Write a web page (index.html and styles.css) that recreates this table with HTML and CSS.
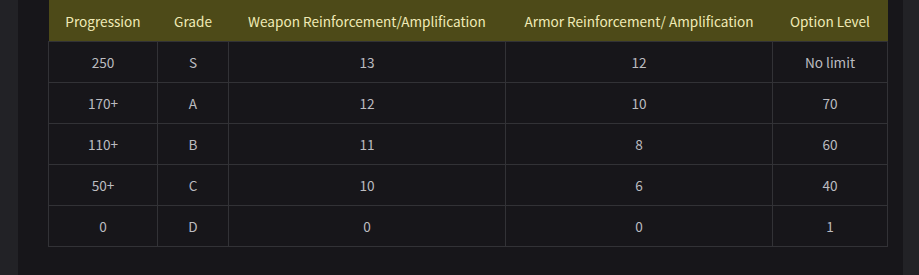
FILE: index.html
```html
<!DOCTYPE html>
<html>
<head>
<meta charset="utf-8">
<link rel="stylesheet" href="styles.css">
</head>
<body>
<div class="side"></div>
<main class="panel">
  <table class="grade-table">
    <colgroup>
      <col class="c1"><col class="c2"><col class="c3"><col class="c4"><col class="c5">
    </colgroup>
    <thead>
      <tr><th>Progression</th><th>Grade</th><th>Weapon Reinforcement/Amplification</th><th>Armor Reinforcement/ Amplification</th><th>Option Level</th></tr>
    </thead>
    <tbody>
      <tr><td>250</td><td>S</td><td>13</td><td>12</td><td>No limit</td></tr>
      <tr><td>170+</td><td>A</td><td>12</td><td>10</td><td>70</td></tr>
      <tr><td>110+</td><td>B</td><td>11</td><td>8</td><td>60</td></tr>
      <tr><td>50+</td><td>C</td><td>10</td><td>6</td><td>40</td></tr>
      <tr><td>0</td><td>D</td><td>0</td><td>0</td><td>1</td></tr>
    </tbody>
  </table>
</main>
<div class="side"></div>
</body>
</html>
```
FILE: styles.css
```css
html, body {
  margin: 0;
  padding: 0;
  height: 100%;
}
body {
  display: flex;
  background: #222226;
  font-family: "Noto Sans CJK KR", "Noto Sans", sans-serif;
  font-size: 13.6px;
}
.side {
  width: 18px;
  flex: none;
}
.side:last-child {
  width: 16px;
}
.panel {
  flex: 1;
  background: #17161a;
  padding: 0 15px 0 30px;
}
.grade-table {
  border-collapse: collapse;
  width: 839px;
  table-layout: fixed;
}
.c1 { width: 109px; }
.c2 { width: 71px; }
.c3 { width: 277px; }
.c4 { width: 267px; }
.c5 { width: 115px; }
.grade-table th {
  background: #4d4a18;
  color: #f0eab6;
  font-weight: 400;
  height: 41px;
  padding: 0;
  text-align: center;
  border: none;
}
.grade-table td {
  height: 40px;
  padding: 0;
  text-align: center;
  color: #bcbcc0;
  border: 1px solid #323236;
}
```
